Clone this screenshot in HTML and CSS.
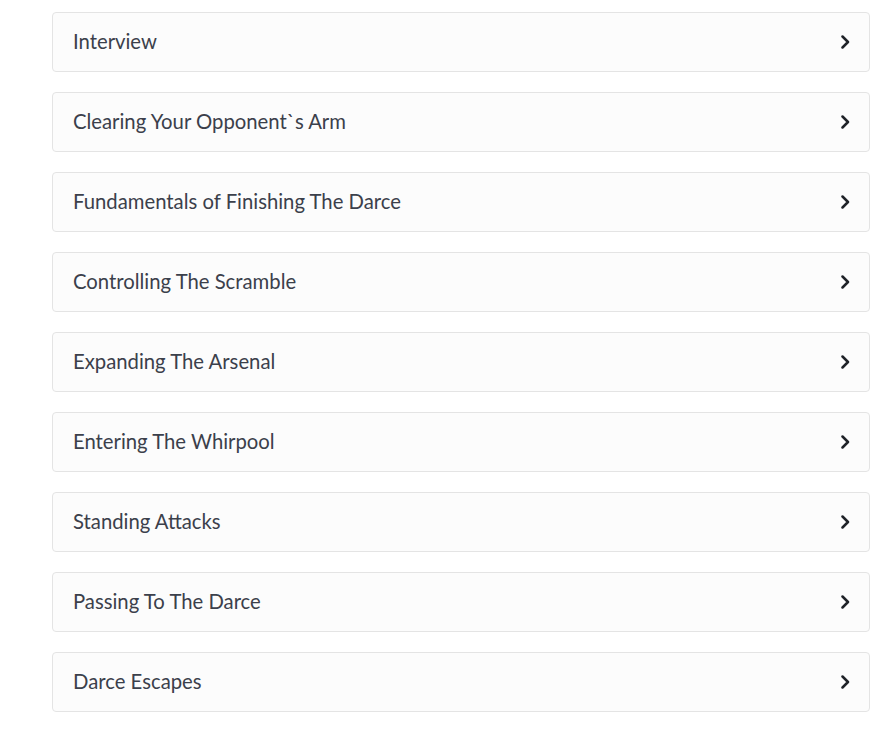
FILE: index.html
```html
<!DOCTYPE html>
<html>
<head>
<meta charset="utf-8">
<link rel="stylesheet" href="styles.css">
</head>
<body>
<div class="list">
  <div class="item"><span class="title">Interview</span><svg class="chev" viewBox="0 0 10 14"><path d="M2.5 1.5 L8 7 L2.5 12.5" /></svg></div>
  <div class="item"><span class="title">Clearing Your Opponent`s Arm</span><svg class="chev" viewBox="0 0 10 14"><path d="M2.5 1.5 L8 7 L2.5 12.5" /></svg></div>
  <div class="item"><span class="title">Fundamentals of Finishing The Darce</span><svg class="chev" viewBox="0 0 10 14"><path d="M2.5 1.5 L8 7 L2.5 12.5" /></svg></div>
  <div class="item"><span class="title">Controlling The Scramble</span><svg class="chev" viewBox="0 0 10 14"><path d="M2.5 1.5 L8 7 L2.5 12.5" /></svg></div>
  <div class="item"><span class="title">Expanding The Arsenal</span><svg class="chev" viewBox="0 0 10 14"><path d="M2.5 1.5 L8 7 L2.5 12.5" /></svg></div>
  <div class="item"><span class="title">Entering The Whirpool</span><svg class="chev" viewBox="0 0 10 14"><path d="M2.5 1.5 L8 7 L2.5 12.5" /></svg></div>
  <div class="item"><span class="title">Standing Attacks</span><svg class="chev" viewBox="0 0 10 14"><path d="M2.5 1.5 L8 7 L2.5 12.5" /></svg></div>
  <div class="item"><span class="title">Passing To The Darce</span><svg class="chev" viewBox="0 0 10 14"><path d="M2.5 1.5 L8 7 L2.5 12.5" /></svg></div>
  <div class="item"><span class="title">Darce Escapes</span><svg class="chev" viewBox="0 0 10 14"><path d="M2.5 1.5 L8 7 L2.5 12.5" /></svg></div>
</div>
</body>
</html>
```
FILE: styles.css
```css
html, body {
  margin: 0;
  padding: 0;
  background: #ffffff;
}
.list {
  display: flex;
  flex-direction: column;
  gap: 20px;
  padding: 12px 0 0 52px;
  width: 818px;
}
.item {
  box-sizing: border-box;
  height: 60px;
  border: 1px solid #e4e4e4;
  border-radius: 4px;
  background: #fcfcfc;
  display: flex;
  align-items: center;
  justify-content: space-between;
  padding: 0 19px 0 20px;
}
.title {
  font-family: Lato, "Liberation Sans", sans-serif;
  font-size: 20.3px;
  line-height: 24px;
  margin-bottom: 3px;
  color: #3b404b;
}
.chev {
  width: 10px;
  height: 14px;
}
.chev path {
  fill: none;
  stroke: #1f2228;
  stroke-width: 2.5;
  stroke-linecap: round;
  stroke-linejoin: round;
}
```
